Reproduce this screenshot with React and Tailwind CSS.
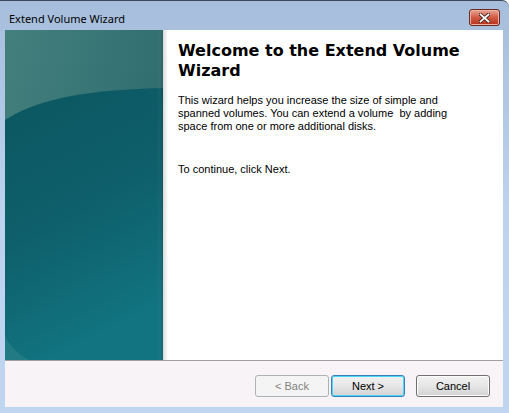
import React from 'react';

function SidePanel() {
  return (
    <div className="w-[158px] h-[330px] shrink-0 bg-[#0f6470]">
      <svg width="158" height="330" viewBox="0 0 158 330" className="block">
        <defs>
          <linearGradient id="topArea" x1="0" y1="0" x2="1" y2="0.6">
            <stop offset="0" stopColor="#43807d" />
            <stop offset="1" stopColor="#2c696d" />
          </linearGradient>
          <linearGradient id="mainArea" x1="0" y1="0" x2="0.3" y2="1">
            <stop offset="0" stopColor="#0b5660" />
            <stop offset="0.55" stopColor="#0e606c" />
            <stop offset="1" stopColor="#117480" />
          </linearGradient>
          <linearGradient id="edge" x1="0" y1="0" x2="1" y2="0">
            <stop offset="0" stopColor="#ffffff" stopOpacity="0" />
            <stop offset="1" stopColor="#000000" stopOpacity="0.12" />
          </linearGradient>
        </defs>
        <rect width="158" height="330" fill="url(#topArea)" />
        <path d="M0 90 C 28 72, 70 60, 158 58 L158 330 L0 330 Z" fill="url(#mainArea)" />
        <path d="M0 306 C 6 318, 14 325, 24 330 L0 330 Z" fill="#2a8088" opacity="0.7" />
        <rect x="152" width="6" height="330" fill="url(#edge)" />
      </svg>
    </div>
  );
}

function Button({ children, variant }) {
  const base =
    'w-[74px] h-[22px] rounded-[3px] border flex items-center justify-center text-[11px] leading-none';
  if (variant === 'disabled') {
    return (
      <button className={`${base} border-[#adb2b5] bg-[#f4f4f4] text-[#838383]`}>{children}</button>
    );
  }
  if (variant === 'default') {
    return (
      <button className={`${base} border-[#3c7fb1] bg-gradient-to-b from-[#f2f2f2] via-[#e6e6e6] to-[#d2d2d2] text-black shadow-[inset_0_0_0_1px_#48d8fb]`}>
        {children}
      </button>
    );
  }
  return (
    <button className={`${base} border-[#707070] bg-gradient-to-b from-[#f2f2f2] via-[#e6e6e6] to-[#d2d2d2] text-black shadow-[inset_0_0_0_1px_#fcfcfc]`}>
      {children}
    </button>
  );
}

export default function App() {
  return (
    <div
      className="w-[509px] h-[413px] flex flex-col bg-gradient-to-b from-[#a6bedc] via-[#bcd2ee] to-[#c0d5f0] border-t border-[#3a4a5c] rounded-tr-[7px] overflow-hidden"
      style={{ fontFamily: '"Liberation Sans", Arial, sans-serif' }}
    >
      {/* title bar */}
      <div className="h-[29px] shrink-0 flex items-center justify-between pl-[9px] pr-[9px]">
        <span
          className="text-[11px] text-black leading-none mt-[5px]"
          style={{ fontFamily: '"Noto Sans", sans-serif' }}
        >
          Extend Volume Wizard
        </span>
        <div className="w-[31px] h-[17px] mt-[4px] rounded-[3px] border border-[#6b2a22] bg-gradient-to-b from-[#e8a595] via-[#cf5a43] to-[#b7311c] flex items-center justify-center shadow-[inset_0_0_0_1px_#eab2a5]">
          <svg width="11" height="10" viewBox="0 0 11 10">
            <path
              d="M1.5 1.5 L9.5 8.5 M9.5 1.5 L1.5 8.5"
              stroke="#3b1a14"
              strokeWidth="3.4"
              strokeLinecap="square"
            />
            <path
              d="M1.5 1.5 L9.5 8.5 M9.5 1.5 L1.5 8.5"
              stroke="#ffffff"
              strokeWidth="1.8"
              strokeLinecap="square"
            />
          </svg>
        </div>
      </div>

      {/* client area */}
      <div className="ml-[5px] mr-[6px] mb-[6px] flex-1 flex flex-col bg-white">
        <div className="h-[330px] flex">
          <SidePanel />
          <div className="w-[5px] shrink-0 bg-gradient-to-r from-[#d9d9d9] to-white" />
          <div className="flex-1 pl-[10px] pt-[11px] pr-[10px]">
            <h1
              className="text-[16px] font-bold leading-[20px] text-black w-[300px]"
              style={{ fontFamily: '"DejaVu Sans", Verdana, sans-serif' }}
            >
              Welcome to the Extend Volume Wizard
            </h1>
            <p className="mt-[13px] text-[11px] leading-[13px] text-black w-[300px] whitespace-pre-wrap">
              {'This wizard helps you increase the size of simple and spanned volumes. You can extend a volume  by adding space from one or more additional disks.'}
            </p>
            <p className="mt-[30px] text-[11px] leading-[13px] text-black">To continue, click Next.</p>
          </div>
        </div>
        <div className="h-px bg-[#a0a0a0]" />
        <div className="flex-1 bg-[#f7f3f7] flex items-start justify-end pt-[14px] pr-[13px]">
          <Button variant="disabled">&lt; Back</Button>
          <div className="w-[2px]" />
          <Button variant="default">Next &gt;</Button>
          <div className="w-[11px]" />
          <Button>Cancel</Button>
        </div>
      </div>
    </div>
  );
}
